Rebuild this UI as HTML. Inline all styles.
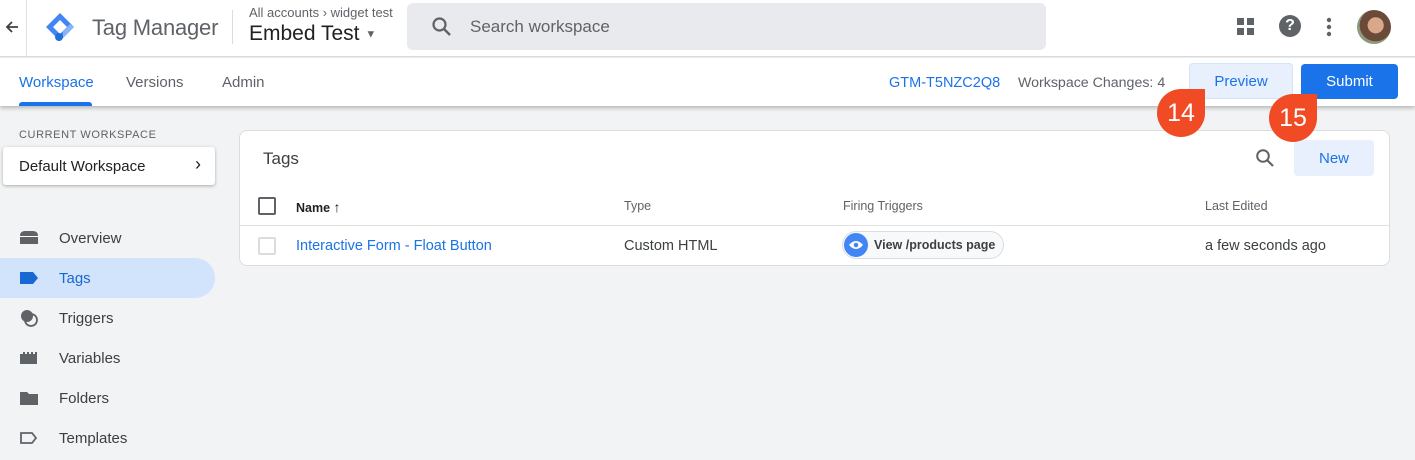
<!DOCTYPE html><html><head><style>
*{box-sizing:border-box;margin:0;padding:0}
body{width:1415px;height:460px;overflow:hidden;background:#f1f3f4;font-family:"Liberation Sans",Arial,sans-serif;position:relative;color:#202124}
.abs{position:absolute}
.top{left:0;top:0;width:1415px;height:57px;background:#fff;border-bottom:1px solid #dadce0}
.tabs{left:0;top:58px;width:1415px;height:48px;background:#fff;box-shadow:0 2px 4px rgba(0,0,0,.25)}
.nav{left:0;width:215px;height:40px;border-radius:0 20px 20px 0;font-size:15px;color:#3c4043}
.nav span{position:absolute;left:59px;top:12px}
.nav svg{position:absolute;left:19px;top:10px}
.card{left:239px;top:130px;width:1151px;height:136px;background:#fff;border:1px solid #dadce0;border-radius:8px}
.badge{width:48px;height:48px;background:#f04b24;border-radius:50% 0 50% 50%;color:#fff;font-size:25px;text-align:center;line-height:48px}
</style></head><body>
<div class="abs top"></div>
<div class="abs" style="left:26px;top:0;width:1px;height:57px;background:#e0e0e0"></div>
<svg class="abs" style="left:4px;top:19px" width="16" height="16" viewBox="0 0 16 16"><path d="M14 8H3M8 3L3 8l5 5" stroke="#3c4043" stroke-width="1.8" fill="none"/></svg>
<svg class="abs" style="left:44px;top:11px" width="32" height="32" viewBox="0 0 32 32"><path d="M16 2L30 16 16 30 2 16z" fill="#4285f4"/><path d="M16 9L23 16 16 23 9 16z" fill="#fff"/><path d="M19 20l7-7 4 3-11 11z" fill="#8ab4f8"/><circle cx="15" cy="26" r="4" fill="#246fdb"/></svg>
<div class="abs" style="left:92px;top:15px;font-size:22px;color:#5f6368;letter-spacing:-0.2px">Tag Manager</div>
<div class="abs" style="left:232px;top:10px;width:1px;height:34px;background:#dadce0"></div>
<div class="abs" style="left:249px;top:5px;font-size:13px;color:#5f6368">All accounts › widget test</div>
<div class="abs" style="left:249px;top:22px;font-size:21px;color:#202124">Embed Test <span style="font-size:11px;color:#5f6368;vertical-align:middle">▼</span></div>
<div class="abs" style="left:407px;top:3px;width:639px;height:47px;background:#e8eaed;border-radius:6px"></div>
<svg class="abs" style="left:431px;top:16px" width="22" height="22" viewBox="0 0 22 22"><circle cx="8.5" cy="8.5" r="6" stroke="#5f6368" stroke-width="2.2" fill="none"/><path d="M13 13l6 6" stroke="#5f6368" stroke-width="2.4"/></svg>
<div class="abs" style="left:470px;top:17px;font-size:17px;color:#5f6368">Search workspace</div>
<svg class="abs" style="left:1237px;top:18px" width="18" height="18"><rect x="0" y="0" width="7" height="7" fill="#5f6368"/><rect x="10" y="0" width="7" height="7" fill="#5f6368"/><rect x="0" y="10" width="7" height="7" fill="#5f6368"/><rect x="10" y="10" width="7" height="7" fill="#5f6368"/></svg>
<div class="abs" style="left:1279px;top:15px;width:22px;height:22px;border-radius:50%;background:#5f6368;color:#fff;font-weight:bold;font-size:16px;text-align:center;line-height:22px">?</div>
<svg class="abs" style="left:1326px;top:17px" width="6" height="20"><circle cx="3" cy="3" r="2.2" fill="#5f6368"/><circle cx="3" cy="10" r="2.2" fill="#5f6368"/><circle cx="3" cy="17" r="2.2" fill="#5f6368"/></svg>
<div class="abs" style="left:1357px;top:10px;width:34px;height:34px;border-radius:50%;background:radial-gradient(circle at 55% 45%,#d9a88a 0 30%,#6b4a3a 31% 60%,#8a9a7a 61%)"></div>
<div class="abs tabs"></div>
<div class="abs" style="left:19px;top:74px;font-size:15px;color:#1a73e8">Workspace</div>
<div class="abs" style="left:19px;top:102px;width:73px;height:4px;background:#1a73e8;border-radius:3px 3px 0 0"></div>
<div class="abs" style="left:126px;top:74px;font-size:15px;color:#5f6368">Versions</div>
<div class="abs" style="left:222px;top:74px;font-size:15px;color:#5f6368">Admin</div>
<div class="abs" style="left:889px;top:75px;font-size:14.5px;color:#1a73e8">GTM-T5NZC2Q8</div>
<div class="abs" style="left:1018px;top:75px;font-size:14.2px;color:#5f6368">Workspace Changes: 4</div>
<div class="abs" style="left:1189px;top:63px;width:104px;height:36px;background:#e8f0fe;border:1px solid #d2e3fc;border-radius:4px;color:#1a73e8;font-size:15px;text-align:center;line-height:36px">Preview</div>
<div class="abs" style="left:1301px;top:64px;width:97px;height:35px;background:#1a73e8;border-radius:4px;color:#fff;font-size:15px;text-align:center;line-height:36px">Submit</div>
<div class="abs" style="left:19px;top:129px;font-size:11px;color:#5f6368;letter-spacing:.6px">CURRENT WORKSPACE</div>
<div class="abs" style="left:3px;top:147px;width:212px;height:38px;background:#fff;border-radius:3px;box-shadow:0 1px 3px rgba(0,0,0,.3);font-size:15px;padding:11px 16px">Default Workspace<span style="position:absolute;right:14px;top:7px;font-size:18px">›</span></div>
<div class="abs nav" style="top:218px"><svg width="20" height="20"><path d="M1 8q0-5 5-5h8q5 0 5 5v8H1z" fill="#5f6368"/><rect x="1" y="8" width="18" height="1" fill="#fff"/></svg><span>Overview</span></div>
<div class="abs nav" style="top:258px;background:#d2e3fc;color:#1967d2"><svg width="20" height="20"><path d="M1 4h13l5 6-5 6H1z" fill="#1967d2"/></svg><span>Tags</span></div>
<div class="abs nav" style="top:298px"><svg width="20" height="20"><circle cx="8" cy="8" r="6" fill="#5f6368"/><circle cx="12" cy="12" r="6" stroke="#5f6368" stroke-width="1.8" fill="none"/></svg><span>Triggers</span></div>
<div class="abs nav" style="top:338px"><svg width="20" height="20"><path d="M1 6h3v-2h2v2h2v-2h2v2h2v-2h2v2h2v-2h2v12H1z" fill="#5f6368"/></svg><span>Variables</span></div>
<div class="abs nav" style="top:378px"><svg width="20" height="20"><path d="M1 4h7l2 2h9v11H1z" fill="#5f6368"/></svg><span>Folders</span></div>
<div class="abs nav" style="top:418px"><svg width="20" height="20"><path d="M2 5h11l4 5-4 5H2z" stroke="#5f6368" stroke-width="1.8" fill="none"/></svg><span>Templates</span></div>
<div class="abs card"></div>
<div class="abs" style="left:263px;top:149px;font-size:17px;color:#3c4043">Tags</div>
<svg class="abs" style="left:1255px;top:148px" width="20" height="20"><circle cx="8" cy="8" r="5.8" stroke="#5f6368" stroke-width="2" fill="none"/><path d="M12 12l6 6" stroke="#5f6368" stroke-width="2.2"/></svg>
<div class="abs" style="left:1294px;top:140px;width:80px;height:36px;background:#e8f0fe;border-radius:4px;color:#1a73e8;font-size:15px;text-align:center;line-height:38px">New</div>
<div class="abs" style="left:258px;top:197px;width:18px;height:18px;border:2px solid #5f6368;border-radius:2px"></div>
<div class="abs" style="left:296px;top:199px;font-size:12.5px;font-weight:bold;color:#202124">Name <span style="font-weight:normal;font-size:14px">↑</span></div>
<div class="abs" style="left:624px;top:199px;font-size:12.5px;color:#5f6368">Type</div>
<div class="abs" style="left:843px;top:199px;font-size:12.5px;color:#5f6368">Firing Triggers</div>
<div class="abs" style="left:1205px;top:199px;font-size:12.5px;color:#5f6368">Last Edited</div>
<div class="abs" style="left:240px;top:225px;width:1149px;height:1px;background:#e0e0e0"></div>
<div class="abs" style="left:258px;top:237px;width:18px;height:18px;border:2px solid #dadce0;border-radius:2px"></div>
<div class="abs" style="left:296px;top:238px;font-size:14.5px;color:#1a73e8">Interactive Form - Float Button</div>
<div class="abs" style="left:624px;top:238px;font-size:14.5px;color:#3c4043">Custom HTML</div>
<div class="abs" style="left:842px;top:231px;width:162px;height:28px;border:1px solid #dadce0;border-radius:14px;background:#f8f9fa"></div>
<div class="abs" style="left:844px;top:233px;width:24px;height:24px;border-radius:50%;background:#4285f4"></div>
<svg class="abs" style="left:848px;top:239px" width="16" height="12"><path d="M1 6q7-8 14 0q-7 8-14 0z" fill="#fff"/><circle cx="8" cy="6" r="2.3" fill="#4285f4"/></svg>
<div class="abs" style="left:874px;top:238px;font-size:12.5px;font-weight:bold;color:#3c4043">View /products page</div>
<div class="abs" style="left:1205px;top:238px;font-size:14.5px;color:#3c4043">a few seconds ago</div>
<div class="abs badge" style="left:1157px;top:89px">14</div>
<div class="abs badge" style="left:1269px;top:94px">15</div>
</body></html>
